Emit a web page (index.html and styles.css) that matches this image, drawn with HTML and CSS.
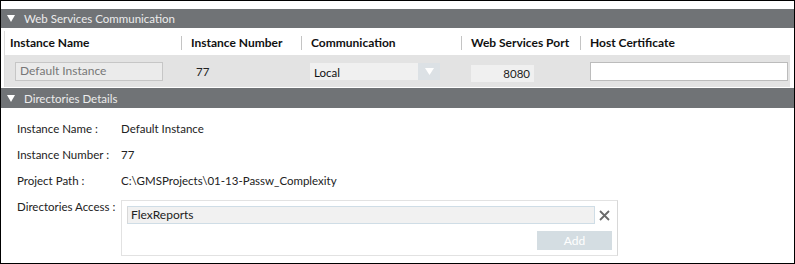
FILE: index.html
```html
<!DOCTYPE html>
<html lang="en">
<head>
    <meta charset="UTF-8">
    <title>Instance Settings</title>
    <link rel="stylesheet" href="styles.css">
</head>
<body>
    <div class="frame">
        <!-- Web services -->
        <div class="bar">
            <svg class="caret" width="8" height="7" viewBox="0 0 8 7"><path d="M0 0 H8 L4 7 Z" fill="#fff"/></svg>
            <span>Web Services Communication</span>
        </div>

        <div class="ws-table">
            <div class="ws-head">
                <div class="hcell first">Instance Name</div>
                <div class="hcell">Instance Number</div>
                <div class="hcell">Communication</div>
                <div class="hcell">Web Services Port</div>
                <div class="hcell">Host Certificate</div>
            </div>
            <div class="ws-row">
                <div class="dcell"><div class="ro-box">Default Instance</div></div>
                <div class="dcell num">77</div>
                <div class="dcell">
                    <div class="select">
                        <span class="select-text">Local</span>
                        <span class="select-btn">
                            <svg width="9" height="7" viewBox="0 0 9 7"><path d="M0 0 H9 L4.5 7 Z" fill="#fff"/></svg>
                        </span>
                    </div>
                </div>
                <div class="dcell"><div class="port">8080</div></div>
                <div class="dcell"><div class="cert"></div></div>
            </div>
        </div>

        <!-- Directories -->
        <div class="bar second">
            <svg class="caret" width="8" height="7" viewBox="0 0 8 7"><path d="M0 0 H8 L4 7 Z" fill="#fff"/></svg>
            <span>Directories Details</span>
        </div>

        <div class="details">
            <div class="label">Instance Name :</div>
            <div class="value">Default Instance</div>
            <div class="label">Instance Number :</div>
            <div class="value">77</div>
            <div class="label">Project Path :</div>
            <div class="value">C:\GMSProjects\01-13-Passw_Complexity</div>
            <div class="label">Directories Access :</div>
            <div class="access">
                <div class="access-item">
                    <div class="item-box">FlexReports</div>
                    <svg class="remove" width="11" height="11" viewBox="0 0 11 11"><path d="M1 1 L10 10 M10 1 L1 10" stroke="#6a6a6a" stroke-width="1.8"/></svg>
                </div>
                <div class="access-foot">
                    <button class="add">Add</button>
                </div>
            </div>
        </div>
    </div>
</body>
</html>
```

FILE: styles.css
```css
body {
    margin: 0;
    font-family: Lato, "Noto Sans", sans-serif;
    font-size: 11.5px;
    color: #222;
    background-color: #fff;
}
.frame {
    width: 795px;
    height: 264px;
    box-sizing: border-box;
    border: 1px solid #000;
    padding-top: 8px;
    overflow: hidden;
    white-space: nowrap;
}
.bar {
    height: 19px;
    background-color: #707376;
    color: #ececec;
    display: flex;
    align-items: center;
    padding-left: 6px;
    font-size: 11.5px;
}
.bar.second {
    height: 20px;
    margin-top: 1px;
}
.caret {
    margin-right: 9px;
}
.ws-table {
    margin: 3px 4px 0 3px;
    border-left: 1px solid #dcdcdc;
}
.ws-head {
    display: grid;
    grid-template-columns: 176px 120px 160px 119px 1fr;
    height: 23px;
    align-items: center;
    font-weight: bold;
    font-size: 12px;
    color: #111;
}
.hcell {
    padding-left: 9px;
    border-left: 1px solid #c4c4c4;
    line-height: 14px;
}
.hcell.first {
    padding-left: 5px;
    border-left: none;
}
.ws-row {
    display: grid;
    grid-template-columns: 176px 120px 160px 119px 1fr;
    height: 32px;
    align-items: center;
    margin-top: 1px;
    background-color: #e3e3e3;
}
.dcell {
    padding-left: 10px;
}
.dcell.num {
    padding-left: 15px;
    color: #222;
}
.ro-box {
    width: 148px;
    height: 19px;
    box-sizing: border-box;
    border: 1px solid #c6c6c6;
    background-color: #ebebeb;
    color: #777;
    padding-left: 4px;
    line-height: 16px;
    font-size: 12px;
}
.select {
    display: flex;
    height: 17px;
    margin-left: -1px;
}
.select-text {
    width: 104px;
    background-color: #f0f0f0;
    padding-left: 4px;
    line-height: 19px;
    color: #111;
}
.select-btn {
    width: 22px;
    background-color: #dce1e5;
    display: flex;
    align-items: center;
    justify-content: center;
}
.port {
    width: 63px;
    height: 17px;
    box-sizing: border-box;
    background-color: #f0f0f0;
    text-align: right;
    padding-right: 4px;
    line-height: 18px;
    margin-top: 4px;
    color: #222;
}
.cert {
    width: 198px;
    height: 19px;
    box-sizing: border-box;
    border: 1px solid #bcbcbc;
    background-color: #fff;
}
.details {
    display: grid;
    grid-template-columns: 104px auto;
    row-gap: 10px;
    padding: 13px 0 0 16px;
    color: #222;
}
.label, .value {
    line-height: 16px;
}
.access {
    width: 497px;
    height: 56px;
    box-sizing: border-box;
    border: 1px solid #e2e2e2;
    border-right-color: #d8d8d8;
    margin-top: 1px;
    padding: 5px 5px 0 5px;
}
.access-item {
    display: flex;
    align-items: center;
}
.item-box {
    width: 468px;
    height: 18px;
    box-sizing: border-box;
    border: 1px solid #cfdde6;
    border-left-color: #d8d8d8;
    background-color: #f1f1f1;
    padding-left: 3px;
    line-height: 16px;
    font-size: 12px;
}
.remove {
    margin-left: 4px;
}
.access-foot {
    display: flex;
    justify-content: flex-end;
    margin-top: 7px;
}
.add {
    width: 75px;
    height: 19px;
    border: none;
    background-color: #d4dde2;
    color: #fff;
    font-family: inherit;
    font-size: 12px;
    padding: 0;
}
```
